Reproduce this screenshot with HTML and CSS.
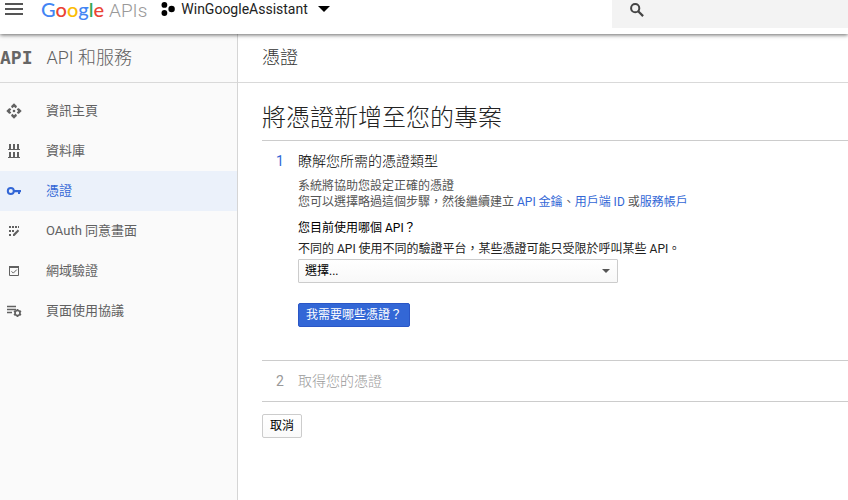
FILE: index.html
```html
<!DOCTYPE html>
<html lang="zh-Hant">
<head>
<meta charset="utf-8">
<title>憑證</title>
<link rel="stylesheet" href="styles.css">
</head>
<body>
<header class="topbar">
  <button class="icon-button menu" type="button" aria-label="選單">
    <svg width="18" height="14" viewBox="0 0 18 14"><path d="M0 2h18M0 7h18M0 12h18" stroke="#555" stroke-width="2"/></svg>
  </button>
  <a class="logo" href="#"><span class="blue">G</span><span class="red">o</span><span class="yellow">o</span><span class="blue">g</span><span class="green">l</span><span class="red">e</span><span class="apis">APIs</span></a>
  <button class="project" type="button">
    <svg width="14" height="14" viewBox="0 0 14 14"><circle cx="3.400" cy="2.900" r="2.900"/><circle cx="10.600" cy="7" r="3.200"/><circle cx="3.400" cy="11" r="2.900"/></svg>
    <span>WinGoogleAssistant</span>
    <svg class="caret" width="12" height="6" viewBox="0 0 12 6"><path d="M0 0h12L6 6z"/></svg>
  </button>
  <label class="search">
    <svg width="14" height="14" viewBox="0 0 14 14" fill="none" stroke="#444"><circle cx="5.200" cy="5.200" r="4.100" stroke-width="2"/><path d="M8.200 8.200l4.900 4.900" stroke-width="2.200"/></svg>
    <input type="search" aria-label="搜尋">
  </label>
</header>
<div class="shell">
  <aside class="sidebar">
    <div class="section-title"><span class="api-mark" aria-hidden="true">API</span><span>API 和服務</span></div>
    <nav class="nav">
      <a href="#"><svg width="16" height="16" viewBox="0 0 16 16" fill="currentColor"><path d="M8 .3l2.800 2.800v1L9.600 5.300 8 3.800 6.400 5.300 5.200 4.100v-1zM8 15.700l2.800-2.800v-1l-1.200-1.200L8 12.200l-1.600-1.500-1.200 1.200v1zM.3 8l2.800-2.800h1l1.200 1.200L3.800 8l1.500 1.600-1.200 1.200h-1zM15.700 8l-2.800-2.800h-1l-1.200 1.200L12.200 8l-1.500 1.600 1.200 1.200h1z"/><circle cx="8" cy="8" r="1.300"/></svg>資訊主頁</a>
      <a href="#"><svg width="16" height="16" viewBox="0 0 16 16" fill="currentColor"><path d="M3 1h2v5H3zM7 1h2v5H7zM11 1h2v5h-2zM2 6h12v1H2zM3 9h2v5H3zM7 9h2v5H7zM11 9h2v5h-2zM2 14h12v1H2z"/></svg>資料庫</a>
      <a class="active" href="#" aria-current="page"><svg width="16" height="16" viewBox="0 0 16 16"><circle cx="4.800" cy="8" r="3" fill="none" stroke="currentColor" stroke-width="2"/><path d="M8 7h7v2.200h-1V11h-2V9.200H8z" fill="currentColor"/></svg>憑證</a>
      <a href="#"><svg width="16" height="16" viewBox="0 0 16 16" fill="currentColor"><path d="M3 3h2v2H3zM6 3h2v2H6zM9 3h2v2H9zM12 3h1v2h-1zM3 7h2v2H3zM6 7h2v2H6zM3 11h2v2H3zM7 11.300l4.800-4.800 1.400 1.400L8.500 13H7z"/></svg>OAuth 同意畫面</a>
      <a href="#"><svg width="16" height="16" viewBox="0 0 16 16" fill="none" stroke="currentColor"><path d="M3.500 3.500h9v9h-9z"/><path d="M3 4h10" stroke-width="2"/><path d="M5.500 8.300l1.800 1.800 3.500-3.500"/></svg>網域驗證</a>
      <a href="#"><svg width="16" height="16" viewBox="0 0 16 16" fill="none" stroke="currentColor"><path d="M1 3.500h9M1 6.500h9M1 9.500h5" stroke-width="1.500"/><circle cx="11.500" cy="10" r="2.500" stroke-width="1.600"/><path d="M11.500 6v1.500M11.500 12.500V14M8 8l1.300.8M13.700 11.200l1.300.8M8 12l1.300-.8M13.700 8.800L15 8" stroke-width="1.800"/></svg>頁面使用協議</a>
    </nav>
  </aside>
  <main class="main">
    <div class="section-title page-title">憑證</div>
    <div class="content">
      <h1>將憑證新增至您的專案</h1>
      <section class="step">
        <span class="number">1</span>
        <div class="step-body">
          <h2>瞭解您所需的憑證類型</h2>
          <p class="intro">系統將協助您設定正確的憑證<br>您可以選擇略過這個步驟，然後繼續建立 <a href="#">API 金鑰</a>、<a href="#">用戶端 ID</a> 或<a href="#">服務帳戶</a></p>
          <label class="question" for="api">您目前使用哪個 API？</label>
          <p class="hint">不同的 API 使用不同的驗證平台，某些憑證可能只受限於呼叫某些 API。</p>
          <div class="select-wrap">
            <select id="api"><option>選擇...</option></select>
            <svg width="8" height="4" viewBox="0 0 8 4"><path d="M0 0h8L4 4z" fill="#555"/></svg>
          </div>
          <button class="primary" type="button">我需要哪些憑證？</button>
        </div>
      </section>
      <section class="step pending">
        <span class="number">2</span>
        <h2>取得您的憑證</h2>
      </section>
      <button class="cancel" type="button">取消</button>
    </div>
  </main>
</div>
</body>
</html>
```
FILE: styles.css
```css
* {
  box-sizing: border-box;
}

body {
  margin: 0;
  min-height: 100vh;
  display: flex;
  flex-direction: column;
  overflow-x: hidden;
  background: #fff;
  color: #222;
  font: 12px/16px Roboto, "Noto Sans CJK TC", sans-serif;
}

button,
input,
select {
  font: inherit;
}

a {
  color: #3367d6;
  text-decoration: none;
}

h1,
h2,
p {
  margin: 0;
}

svg {
  flex: none;
}

.topbar {
  position: relative;
  display: flex;
  align-items: flex-start;
  height: 34px;
  padding-left: 5px;
  background: #fff;
  box-shadow: 0 1px 4px rgba(0, 0, 0, 0.6);
}

.icon-button,
.project {
  display: flex;
  align-items: center;
  height: 18px;
  padding: 0;
  border: 0;
  background: none;
  color: #222;
}

.logo {
  margin-left: 18px;
  font: 500 20px/18px Lato, sans-serif;
  white-space: nowrap;
}

.blue {
  color: #4285f4;
}

.red {
  color: #ea4335;
}

.yellow {
  color: #fbbc05;
}

.green {
  color: #34a853;
}

.apis {
  margin-left: 5px;
  color: #999;
  font: 300 19px/18px Roboto, sans-serif;
}

.project {
  gap: 6px;
  margin-left: 14px;
  font-size: 14px;
}

.caret {
  margin-left: 4px;
}

.search {
  display: flex;
  align-items: center;
  gap: 16px;
  width: 28%;
  height: 28px;
  margin-left: auto;
  padding: 0 0 8px 18px;
  background: #f3f3f3;
}

.search input {
  flex: 1;
  min-width: 0;
  border: 0;
  outline: 0;
  background: none;
}

.shell {
  flex: 1;
  display: flex;
}

.sidebar {
  flex: none;
  width: 238px;
  border-right: 1px solid #d5d5d5;
  background: #fafafa;
}

.section-title {
  display: flex;
  align-items: center;
  gap: 14px;
  height: 49px;
  border-bottom: 1px solid #d9d9d9;
  color: #616161;
  font-size: 18px;
  font-weight: 300;
  line-height: 24px;
}

.api-mark {
  color: #666;
  font: bold 18px/24px "DejaVu Sans Mono", monospace;
}

.nav {
  padding-top: 8px;
}

.nav a {
  display: flex;
  align-items: center;
  gap: 24px;
  height: 40px;
  padding-left: 6px;
  color: #616161;
  font-size: 13px;
}

.nav .active {
  background: #ebf1fa;
  color: #3367d6;
}

.main {
  flex: 1;
  min-width: 0;
}

.page-title {
  padding-left: 24px;
  color: #333;
}

.content {
  padding: 18px 0 24px 24px;
}

h1 {
  padding-bottom: 5px;
  font-size: 24px;
  font-weight: 300;
  line-height: 34px;
}

.step {
  display: flex;
  padding: 12px 0 33px 14px;
  border-top: 1px solid #ccc;
}

.number {
  width: 22px;
  color: #3367d6;
  font-size: 14px;
  line-height: 16px;
}

h2 {
  font-size: 14px;
  font-weight: 300;
  line-height: 16px;
}

.step-body h2 {
  color: #000;
}

.intro {
  margin-top: 9px;
  color: #555;
}

.question {
  display: block;
  margin-top: 10px;
  color: #000;
}

.hint {
  margin-top: 5px;
}

.select-wrap {
  position: relative;
  width: 320px;
  max-width: 100%;
  margin-top: 2px;
}

.select-wrap svg {
  position: absolute;
  top: 10px;
  right: 8px;
  pointer-events: none;
}

select {
  display: block;
  appearance: none;
  width: 100%;
  height: 24px;
  padding: 0 6px;
  border: 1px solid #ccc;
  border-radius: 1px;
  background: linear-gradient(#fff, #f8f8f8);
  color: #000;
}

.primary,
.cancel {
  height: 24px;
  padding: 0 7px;
  border: 1px solid #ccc;
  border-radius: 2px;
  background: linear-gradient(#fff, #fafafa);
  color: #000;
}

.primary {
  margin-top: 20px;
  border-color: #2a56c6;
  background: #3367d6;
  color: #fff;
}

.pending {
  padding-bottom: 12px;
  border-bottom: 1px solid #ccc;
}

.pending .number,
.pending h2 {
  color: #999;
}

.cancel {
  margin-top: 12px;
}
```
